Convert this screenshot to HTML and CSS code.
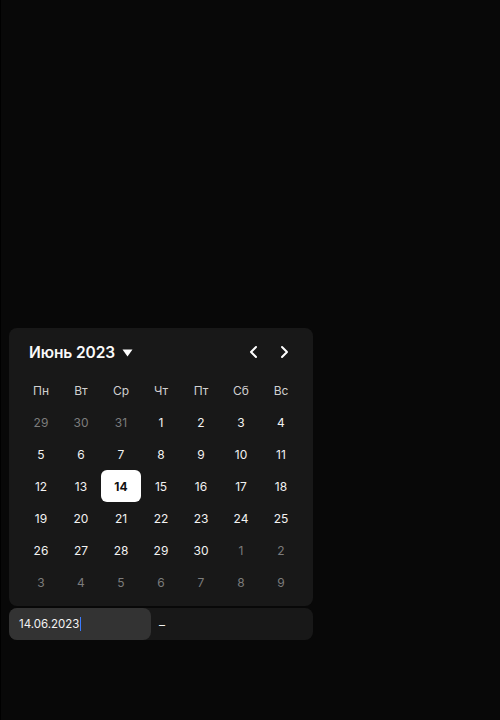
FILE: index.html
```html
<!DOCTYPE html>
<html lang="ru">
<head>
<meta charset="utf-8">
<link rel="stylesheet" href="styles.css">
</head>
<body>
<div class="page">
  <div class="picker">
    <div class="calendar">
      <div class="head">
        <div class="title">Июнь 2023
          <svg class="caret" width="11" height="8" viewBox="0 0 11 8"><path d="M0.5 0.5h10L5.5 7.5z" fill="#fff"/></svg>
        </div>
        <div class="nav">
          <svg width="32" height="24" viewBox="0 0 32 24"><path d="M19 7l-5 5 5 5" fill="none" stroke="#fff" stroke-width="2" stroke-linecap="round" stroke-linejoin="round"/></svg>
          <svg width="32" height="24" viewBox="0 0 32 24"><path d="M13 7l5 5-5 5" fill="none" stroke="#fff" stroke-width="2" stroke-linecap="round" stroke-linejoin="round"/></svg>
        </div>
      </div>
      <div class="grid">
        <div class="wd">Пн</div><div class="wd">Вт</div><div class="wd">Ср</div><div class="wd">Чт</div><div class="wd">Пт</div><div class="wd">Сб</div><div class="wd">Вс</div>
        <div class="d out">29</div><div class="d out">30</div><div class="d out">31</div><div class="d">1</div><div class="d">2</div><div class="d">3</div><div class="d">4</div>
        <div class="d">5</div><div class="d">6</div><div class="d">7</div><div class="d">8</div><div class="d">9</div><div class="d">10</div><div class="d">11</div>
        <div class="d">12</div><div class="d">13</div><div class="d sel">14</div><div class="d">15</div><div class="d">16</div><div class="d">17</div><div class="d">18</div>
        <div class="d">19</div><div class="d">20</div><div class="d">21</div><div class="d">22</div><div class="d">23</div><div class="d">24</div><div class="d">25</div>
        <div class="d">26</div><div class="d">27</div><div class="d">28</div><div class="d">29</div><div class="d">30</div><div class="d out">1</div><div class="d out">2</div>
        <div class="d out">3</div><div class="d out">4</div><div class="d out">5</div><div class="d out">6</div><div class="d out">7</div><div class="d out">8</div><div class="d out">9</div>
      </div>
    </div>
    <div class="range">
      <div class="field"><span>14.06.2023</span><span class="cursor"></span></div>
      <div class="dash">–</div>
    </div>
  </div>
</div>
</body>
</html>
```
FILE: styles.css
```css
html, body {
  margin: 0;
  padding: 0;
  background: #080808;
}
body {
  width: 500px;
  height: 720px;
  border-left: 1px solid #000;
  box-sizing: border-box;
  font-family: "Inter", "Noto Sans", sans-serif;
  color: #f2f2f2;
}
.page {
  padding: 328px 0 0 8px;
}
.picker {
  width: 304px;
  display: flex;
  flex-direction: column;
  gap: 2px;
}
.calendar {
  background: #181818;
  border-radius: 8px;
  padding: 12px 12px 8px;
}
.head {
  height: 24px;
  display: flex;
  align-items: center;
  justify-content: space-between;
  margin-bottom: 10px;
}
.title {
  display: flex;
  align-items: center;
  gap: 7px;
  padding-left: 8px;
  font-size: 15.5px;
  font-weight: 600;
  color: #fafafa;
  letter-spacing: -0.1px;
}
.caret { margin-top: 1px; }
.nav {
  display: flex;
}
.grid {
  display: grid;
  grid-template-columns: repeat(7, 40px);
  grid-auto-rows: 32px;
}
.wd, .d {
  display: flex;
  align-items: center;
  justify-content: center;
  font-size: 12px;
}
.wd { color: #d0d0d0; }
.d { color: #f2f2f2; }
.d.out { color: #7c7c7c; }
.d.sel {
  background: #fff;
  color: #111;
  font-weight: 700;
  border-radius: 6px;
}
.range {
  height: 32px;
  background: #181818;
  border-radius: 8px;
  display: flex;
  align-items: center;
}
.field {
  width: 142px;
  height: 32px;
  box-sizing: border-box;
  background: #333333;
  border-radius: 8px;
  padding-left: 10px;
  display: flex;
  align-items: center;
  font-size: 11.5px;
  color: #f2f2f2;
}
.cursor {
  width: 1px;
  height: 14px;
  background: #3b7bff;
  margin-left: 1px;
}
.dash {
  margin-left: 8px;
  font-size: 12px;
  color: #f2f2f2;
}
```
